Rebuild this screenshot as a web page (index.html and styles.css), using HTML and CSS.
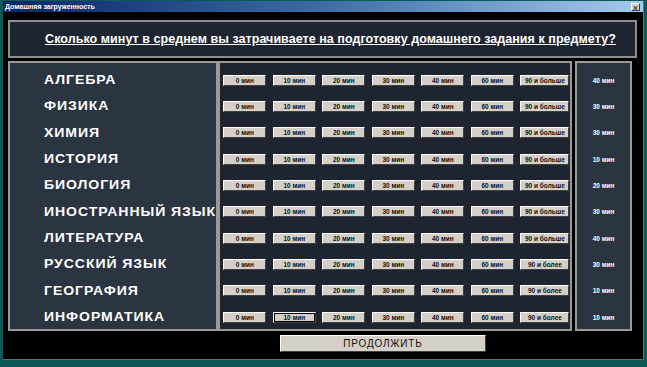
FILE: index.html
```html
<!DOCTYPE html>
<html lang="ru">

<head>
    <meta charset="UTF-8">
    <title>Домашняя загруженность</title>
    <link rel="stylesheet" href="styles.css">
</head>

<body>
    <div class="window">
        <div class="titlebar">
            <span class="title">Домашняя загруженность</span>
            <span class="close">×</span>
        </div>
        <div class="content">
            <div class="question">
                <span>Сколько минут в среднем вы затрачиваете на подготовку домашнего задания к предмету?</span>
            </div>
            <div class="main">
                <div class="subjects">
                    <div class="subject">АЛГЕБРА</div>
                    <div class="subject">ФИЗИКА</div>
                    <div class="subject">ХИМИЯ</div>
                    <div class="subject">ИСТОРИЯ</div>
                    <div class="subject">БИОЛОГИЯ</div>
                    <div class="subject">ИНОСТРАННЫЙ ЯЗЫК</div>
                    <div class="subject">ЛИТЕРАТУРА</div>
                    <div class="subject">РУССКИЙ ЯЗЫК</div>
                    <div class="subject">ГЕОГРАФИЯ</div>
                    <div class="subject">ИНФОРМАТИКА</div>
                </div>
                <div class="choices">
                    <div class="row"><button>0 мин</button><button>10 мин</button><button>20 мин</button><button>30 мин</button><button>40 мин</button><button>60 мин</button><button class="wide">90 и больше</button></div>
                    <div class="row"><button>0 мин</button><button>10 мин</button><button>20 мин</button><button>30 мин</button><button>40 мин</button><button>60 мин</button><button class="wide">90 и больше</button></div>
                    <div class="row"><button>0 мин</button><button>10 мин</button><button>20 мин</button><button>30 мин</button><button>40 мин</button><button>60 мин</button><button class="wide">90 и больше</button></div>
                    <div class="row"><button>0 мин</button><button>10 мин</button><button>20 мин</button><button>30 мин</button><button>40 мин</button><button>60 мин</button><button class="wide">90 и больше</button></div>
                    <div class="row"><button>0 мин</button><button>10 мин</button><button>20 мин</button><button>30 мин</button><button>40 мин</button><button>60 мин</button><button class="wide">90 и больше</button></div>
                    <div class="row"><button>0 мин</button><button>10 мин</button><button>20 мин</button><button>30 мин</button><button>40 мин</button><button>60 мин</button><button class="wide">90 и больше</button></div>
                    <div class="row"><button>0 мин</button><button>10 мин</button><button>20 мин</button><button>30 мин</button><button>40 мин</button><button>60 мин</button><button class="wide">90 и больше</button></div>
                    <div class="row"><button>0 мин</button><button>10 мин</button><button>20 мин</button><button>30 мин</button><button>40 мин</button><button>60 мин</button><button class="wide">90 и более</button></div>
                    <div class="row"><button>0 мин</button><button>10 мин</button><button>20 мин</button><button>30 мин</button><button>40 мин</button><button>60 мин</button><button class="wide">90 и более</button></div>
                    <div class="row"><button>0 мин</button><button class="focused">10 мин</button><button>20 мин</button><button>30 мин</button><button>40 мин</button><button>60 мин</button><button class="wide">90 и более</button></div>
                </div>
                <div class="results">
                    <div class="result">40 мин</div>
                    <div class="result">30 мин</div>
                    <div class="result">30 мин</div>
                    <div class="result">10 мин</div>
                    <div class="result">20 мин</div>
                    <div class="result">30 мин</div>
                    <div class="result">40 мин</div>
                    <div class="result">30 мин</div>
                    <div class="result">10 мин</div>
                    <div class="result">10 мин</div>
                </div>
            </div>
            <div class="footer">
                <button class="continue">ПРОДОЛЖИТЬ</button>
            </div>
        </div>
    </div>
</body>

</html>
```

FILE: styles.css
```css
body {
    margin: 0;
    width: 647px;
    height: 367px;
    background-color: #0c5a57;
    font-family: "Liberation Sans", Arial, sans-serif;
    overflow: hidden;
}

.window {
    margin: 1px 0 0 3px;
    width: 641px;
    height: 359px;
    background-color: #000;
    border-right: 1px solid #6c6c6c;
    border-bottom: 1px solid #6c6c6c;
    box-sizing: border-box;
}

.titlebar {
    height: 11px;
    display: flex;
    align-items: center;
    justify-content: space-between;
    background: linear-gradient(to right, #0a246a, #3a6ea5 50%, #a6caf0);
    padding: 0 3px 0 2px;
}

.title {
    color: white;
    font-size: 7px;
    font-weight: bold;
}

.close {
    width: 9px;
    height: 8px;
    line-height: 8px;
    font-size: 9px;
    text-align: center;
    background-color: #d4d0c8;
    color: #000;
    border: 1px solid;
    border-color: #fff #404040 #404040 #fff;
    box-sizing: border-box;
}

.content {
    padding: 8px 6px 0 5px;
}

.question {
    height: 38px;
    box-sizing: border-box;
    border: 2px solid #8e8e8e;
    background-color: #1e2530;
    display: flex;
    align-items: center;
    justify-content: center;
    padding-left: 16px;
    color: white;
    font-size: 12.5px;
    font-weight: bold;
    letter-spacing: 0.05px;
    text-decoration: underline;
}

.main {
    display: flex;
    margin-top: 3px;
    height: 270px;
    margin-right: 5px;
}

.subjects,
.choices,
.results {
    border: 2px solid #9a9a9a;
    box-sizing: border-box;
    display: grid;
    grid-template-rows: repeat(10, 26.33px);
    padding-top: 4px;
}

.subjects {
    width: 211px;
    background-color: #2b3542;
    padding-left: 34px;
}

.subject {
    color: white;
    font-size: 12px;
    font-weight: bold;
    letter-spacing: 0.8px;
    display: flex;
    align-items: center;
    white-space: nowrap;
    transform: scaleX(1.17);
    transform-origin: left center;
}

.choices {
    width: 355px;
    background-color: #1e2530;
    padding-left: 3px;
}

.row {
    display: flex;
    align-items: center;
    gap: 6.5px;
}

button {
    font-family: "Liberation Sans", Arial, sans-serif;
    background-color: #d4d0c8;
    color: #111;
    border: 1px solid;
    border-color: #fff #404040 #404040 #fff;
    padding: 0;
}

.row button {
    width: 43px;
    height: 11px;
    font-size: 6.5px;
    font-weight: bold;
    line-height: 9px;
}

.row .wide {
    width: 49px;
}

.row .focused {
    outline: 1px solid #000;
    outline-offset: -2px;
}

.results {
    width: 57px;
    margin-left: 3px;
    background-color: #2b3542;
}

.result {
    color: white;
    font-size: 6.5px;
    font-weight: bold;
    display: flex;
    align-items: center;
    justify-content: center;
}

.footer {
    padding: 2px 0 0 272px;
}

.continue {
    width: 206px;
    height: 17px;
    font-size: 10px;
    letter-spacing: 0.8px;
}
```
